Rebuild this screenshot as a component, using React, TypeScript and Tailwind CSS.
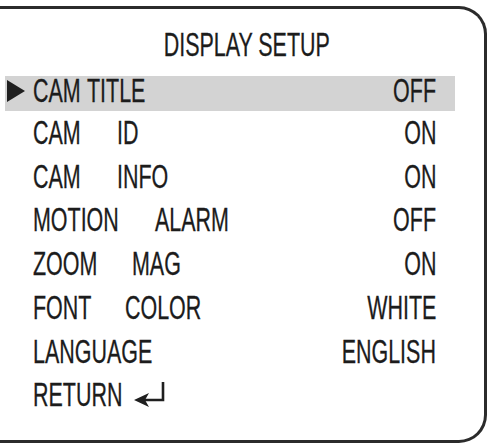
const font = { fontFamily: '"Liberation Sans", Arial, sans-serif' };

type Row = {
  words: { text: string; w?: string }[];
  value?: string;
  active?: boolean;
};

const rows: Row[] = [
  { words: [{ text: 'CAM', w: 'w-[54px]' }, { text: 'TITLE' }], value: 'OFF', active: true },
  { words: [{ text: 'CAM', w: 'w-[84px]' }, { text: 'ID' }], value: 'ON' },
  { words: [{ text: 'CAM', w: 'w-[84px]' }, { text: 'INFO' }], value: 'ON' },
  { words: [{ text: 'MOTION', w: 'w-[122px]' }, { text: 'ALARM' }], value: 'OFF' },
  { words: [{ text: 'ZOOM', w: 'w-[99px]' }, { text: 'MAG' }], value: 'ON' },
  { words: [{ text: 'FONT', w: 'w-[92px]' }, { text: 'COLOR' }], value: 'WHITE' },
  { words: [{ text: 'LANGUAGE' }], value: 'ENGLISH' },
];

function Label({ words }: { words: Row['words'] }) {
  return (
    <div className="flex items-center">
      {words.map((word, i) => (
        <span key={i} className={`${word.w ?? ''} shrink-0`}>
          <span className="inline-block origin-left scale-x-[0.65] whitespace-nowrap">{word.text}</span>
        </span>
      ))}
    </div>
  );
}

function Value({ text }: { text: string }) {
  return (
    <span className="ml-auto inline-block origin-right scale-x-[0.65] whitespace-nowrap">{text}</span>
  );
}

function Cursor() {
  return (
    <svg width="18" height="22" viewBox="0 0 18 22" className="mr-[8px] shrink-0">
      <polygon points="0,0 18,11 0,22" fill="#1f1f1f" />
    </svg>
  );
}

function ReturnArrow() {
  return (
    <svg width="32" height="28" viewBox="0 0 32 28" className="ml-[12px] shrink-0">
      <path d="M29 1 V19 H10" fill="none" stroke="#1f1f1f" strokeWidth="2.6" />
      <polygon points="0,19 15,12 11,19 15,26" fill="#1f1f1f" />
    </svg>
  );
}

export default function App() {
  return (
    <div
      className="w-[489px] h-[445px] bg-white overflow-hidden text-[33px] leading-none text-[#1c1c1c] [-webkit-text-stroke:0.3px_#1c1c1c]"
      style={font}
    >
      <div className="mt-[6px] mr-[2px] h-[437px] border-y-[3px] border-r-[3px] border-[#2b2b2b] rounded-r-[28px] pt-[14px]">
        {/* Title */}
        <div className="h-[43.75px] flex items-center justify-center pl-[9px]">
          <span className="inline-block scale-x-[0.65] whitespace-nowrap">DISPLAY SETUP</span>
        </div>

        {rows.map((row, i) =>
          row.active ? (
            <div key={i} className="h-[43.75px] flex flex-col justify-end">
              <div className="ml-[5px] w-[450px] h-[35px] bg-[#d3d3d3] flex items-center pl-[2px] pr-[19px] pb-[5px]">
                <Cursor />
                <Label words={row.words} />
                <Value text={row.value ?? ''} />
              </div>
            </div>
          ) : (
            <div key={i} className="h-[43.75px] flex items-center pl-[33px] pr-[48px]">
              <Label words={row.words} />
              <Value text={row.value ?? ''} />
            </div>
          )
        )}

        {/* Return */}
        <div className="h-[43.75px] flex items-center pl-[33px] pr-[48px]">
          <span className="w-[89px] shrink-0">
            <span className="inline-block origin-left scale-x-[0.65] whitespace-nowrap">RETURN</span>
          </span>
          <ReturnArrow />
        </div>
      </div>
    </div>
  );
}
